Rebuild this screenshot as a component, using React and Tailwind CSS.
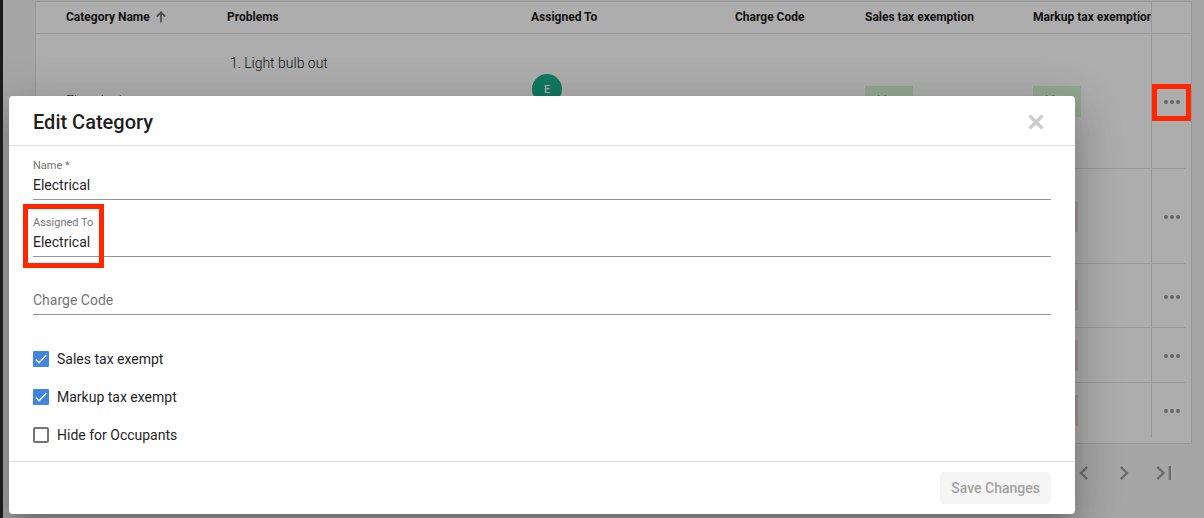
import React, { useState } from "react";

const ROWS = [
  {
    name: "Electrical",
    problem: "Light bulb out",
    assignee: "Electrical",
    exempt: true,
    height: "h-[135px]",
  },
  { exempt: false, height: "h-[95px]" },
  { exempt: false, height: "h-[64px]" },
  { exempt: false, height: "h-[55px]" },
  { exempt: false, height: "h-[54px]", last: true },
];

const HEAD = "overflow-hidden border-b border-[#e0e0e0] p-0 pb-0.5 pl-2.5 text-left font-bold whitespace-nowrap";

function Badge({ yes }) {
  return yes ? (
    <span className="flex h-[31px] w-12 items-center justify-center bg-[#d9f7d6] font-light text-[#5d8a5a]">
      Yes
    </span>
  ) : (
    <span className="flex h-[31px] w-[45px] items-center justify-center bg-[#f9d9d9] font-light text-[#a05c5c]">
      No
    </span>
  );
}

function Dots() {
  return (
    <svg viewBox="0 0 16 4" className="h-1 w-4" fill="currentColor" aria-hidden="true">
      <circle cx="2" cy="2" r="2" />
      <circle cx="8" cy="2" r="2" />
      <circle cx="14" cy="2" r="2" />
    </svg>
  );
}

function CategoryTable() {
  return (
    <div className="border border-[#e0e0e0] bg-white pb-1.5">
      <table className="w-full table-fixed border-separate border-spacing-0 text-sm">
        <colgroup>
          <col className="w-[181px]" />
          <col />
          <col className="w-[204px]" />
          <col className="w-[130px]" />
          <col className="w-[168px]" />
          <col className="w-[128px]" />
          <col className="w-[34px]" />
          <col className="w-1.5" />
        </colgroup>
        <thead>
          <tr className="h-8 text-xs text-[#1a1a1a]">
            <th className="border-b border-[#e0e0e0] p-0 pb-0.5 pl-[30px] text-left font-bold whitespace-nowrap">
              <span className="flex items-center gap-1.5">
                Category Name
                <svg viewBox="0 0 10 12" className="h-3 w-2.5 text-[#707070]" fill="none" stroke="currentColor" strokeWidth="1.7" aria-hidden="true">
                  <path d="M5 11.500V1.400M.7 5.600 5 1.300l4.300 4.300" />
                </svg>
              </span>
            </th>
            <th className={HEAD}>Problems</th>
            <th className={HEAD}>Assigned To</th>
            <th className={HEAD}>Charge Code</th>
            <th className={HEAD}>Sales tax exemption</th>
            <th className={HEAD}>Markup tax exemption</th>
            <th colSpan={2} className="border-b border-l border-[#e0e0e0]" aria-label="Actions" />
          </tr>
        </thead>
        <tbody>
          {ROWS.map((row, i) => {
            const cell = row.last ? "border-[#e0e0e0] p-0 pl-2.5" : "border-b border-[#e0e0e0] p-0 pl-2.5";
            return (
              <tr key={i} className={row.height}>
                <td className={row.last ? "pl-[30px]" : "border-b border-[#e0e0e0] p-0 pl-[30px] font-light text-[#4a4a4a]"}>{row.name}</td>
                <td className={cell + " align-top"}>
                  {row.problem && (
                    <ol className="pt-[19px] pl-[3px] leading-5 font-light text-[#1a1a1a]">
                      <li className="flex gap-[3px]">
                        <span>1.</span>
                        {row.problem}
                      </li>
                    </ol>
                  )}
                </td>
                <td className={cell}>
                  {row.assignee && (
                    <div className="flex flex-col">
                      <span className="ml-px flex size-[30px] items-center justify-center rounded-full bg-[#18b38d] pt-0.5 text-[11px] font-medium text-white">E</span>
                      <span className="leading-6">{row.assignee}</span>
                    </div>
                  )}
                </td>
                <td className={cell} />
                <td className={cell}>
                  <Badge yes={row.exempt} />
                </td>
                <td className={cell}>
                  <Badge yes={row.exempt} />
                </td>
                <td className={row.last ? "border-l border-[#e0e0e0] p-0" : "border-b border-l border-[#e0e0e0] p-0"}>
                  <button type="button" aria-label="Row actions" className="flex h-8 w-full items-center justify-center pt-0.5 pl-1.5 text-[#969696]">
                    <Dots />
                  </button>
                </td>
                <td className="p-0" />
              </tr>
            );
          })}
        </tbody>
      </table>
    </div>
  );
}

function PageButton({ label, d }) {
  return (
    <button type="button" aria-label={label} className="flex size-10 items-center justify-center">
      <svg viewBox="0 0 24 24" className="size-7" fill="currentColor" aria-hidden="true">
        <path d={d} />
      </svg>
    </button>
  );
}

function Field({ id, label, value }) {
  return (
    <div className="flex flex-col gap-0.5 border-b border-[#949494] pb-1">
      <label htmlFor={id} className="text-[11px] leading-[14px] text-[#757575]">
        {label}
      </label>
      <input id={id} defaultValue={value} className="h-5 w-full bg-transparent text-sm text-[#1f1f1f] outline-none" />
    </div>
  );
}

function Check({ label, initial }) {
  const [on, setOn] = useState(initial);
  return (
    <label className="flex h-4 items-center gap-2 text-sm text-[#1f1f1f]">
      <span className="grid size-4">
        <input
          type="checkbox"
          checked={on}
          onChange={(e) => setOn(e.target.checked)}
          className="col-start-1 row-start-1 size-4 appearance-none rounded-[2px] border-2 border-[#757575] checked:rounded-[1px] checked:border-[#4285de] checked:bg-[#4285de]"
        />
        {on && (
          <svg viewBox="0 0 16 16" className="pointer-events-none col-start-1 row-start-1 size-4" fill="none" stroke="white" strokeWidth="1.4" aria-hidden="true">
            <path d="M2.800 8.500 6 11.700 13.300 4.300" />
          </svg>
        )}
      </span>
      {label}
    </label>
  );
}

function EditDialog() {
  return (
    <form
      role="dialog"
      aria-labelledby="dialog-title"
      onSubmit={(e) => e.preventDefault()}
      className="rounded bg-white shadow-[0_11px_15px_-7px_rgba(0,0,0,0.2),0_24px_38px_3px_rgba(0,0,0,0.14),0_9px_46px_8px_rgba(0,0,0,0.12)]"
    >
      <header className="flex h-[50px] items-center justify-between border-b border-[#e0e0e0] pt-0.5 pr-[31px] pl-6">
        <h2 id="dialog-title" className="text-xl font-medium text-[#1f1f1f]">
          Edit Category
        </h2>
        <button type="button" aria-label="Close" className="text-[#cccccc]">
          <svg viewBox="0 0 16 16" className="size-4" fill="none" stroke="currentColor" strokeWidth="3.2" aria-hidden="true">
            <path d="M1.500 1.500l13 13M14.500 1.500l-13 13" />
          </svg>
        </button>
      </header>
      <div className="flex flex-col gap-4 px-6 pt-[13px]">
        <Field id="name" label="Name *" value="Electrical" />
        <div className="relative">
          <Field id="assigned" label="Assigned To" value="Electrical" />
          <div className="pointer-events-none absolute -top-3 -left-2.5 h-16 w-[81px] border-5 border-[#ff2600]" />
        </div>
        <div className="border-b border-[#949494] pt-[17px] pb-1">
          <input
            aria-label="Charge Code"
            placeholder="Charge Code"
            className="block h-5 w-full bg-transparent text-sm outline-none placeholder:text-[#757575]"
          />
        </div>
      </div>
      <div className="flex flex-col gap-[22px] px-6 pt-9 pb-[18px]">
        <Check label="Sales tax exempt" initial={true} />
        <Check label="Markup tax exempt" initial={true} />
        <Check label="Hide for Occupants" initial={false} />
      </div>
      <footer className="flex justify-end border-t border-[#e0e0e0] px-6 py-2.5">
        <button type="submit" disabled className="h-8 rounded bg-[#f5f5f5] px-[11px] text-sm font-medium text-[#a3a3a3]">
          Save Changes
        </button>
      </footer>
    </form>
  );
}

export default function App() {
  return (
    <div className="flex min-h-screen bg-[#1b1b1b] pl-[3px] font-['Roboto',sans-serif]">
      <div className="relative flex-1 overflow-hidden bg-[#f5f5f5]">
        <main className="pt-px pr-3 pl-8">
          <CategoryTable />
          <nav aria-label="Pagination" className="flex justify-end pt-[9px] pr-2 text-[#a2a2a2]">
            <PageButton label="Previous page" d="M15.410 7.410 14 6l-6 6 6 6 1.410-1.410L10.830 12z" />
            <PageButton label="Next page" d="M10 6 8.590 7.410 13.170 12l-4.580 4.590L10 18l6-6z" />
            <PageButton label="Last page" d="M5.590 7.410 10.180 12l-4.590 4.590L7 18l6-6-6-6zM16 6h2v12h-2z" />
          </nav>
        </main>
        <div className="absolute inset-0 bg-black/32 pt-24 pr-[129px] pl-1.5">
          <EditDialog />
        </div>
        <div className="pointer-events-none absolute top-[84px] right-[13px] h-[37px] w-[39px] border-5 border-[#ff2600]" />
      </div>
    </div>
  );
}
